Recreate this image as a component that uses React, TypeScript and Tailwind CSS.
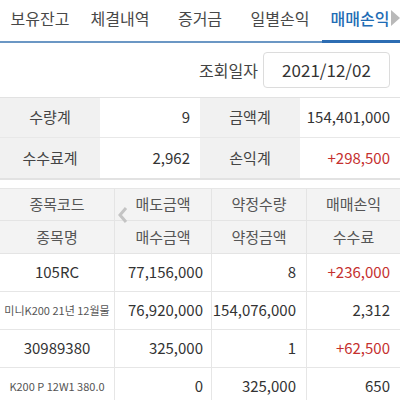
import { useState } from 'react';

const tabs = ['보유잔고', '체결내역', '증거금', '일별손익', '매매손익'];

const rows = [
  { code: '105RC', name: '미니K200 21년 12월물', sell: '77,156,000', buy: '76,920,000', qty: '8', amt: '154,076,000', pl: '+236,000', fee: '2,312' },
  { code: '30989380', name: 'K200 P 12W1 380.0', sell: '325,000', buy: '0', qty: '1', amt: '325,000', pl: '+62,500', fee: '650' },
];

export default function App() {
  const [active, setActive] = useState(4);

  return (
    <div
      className="w-[400px] h-[400px] overflow-hidden bg-white text-[#333]"
      style={{ fontFamily: '"Noto Sans CJK KR", "Noto Sans", sans-serif' }}
    >
      {/* Tabs */}
      <div className="relative flex h-[43px] border-b-2 border-[#6b97c4]">
        {tabs.map((t, i) => (
          <button
            key={t}
            onClick={() => setActive(i)}
            className={`relative w-[80px] shrink-0 pb-[5px] text-[16px] ${i === active ? 'text-[#1f6db5] font-medium' : 'text-[#484848]'}`}
          >
            {t}
            {i === active && <span className="absolute left-[2px] right-[-2px] bottom-[-2px] h-[3px] bg-[#2d6db3]" />}
          </button>
        ))}
        <svg className="absolute right-0 top-[10px]" width="9" height="16" viewBox="0 0 9 16">
          <path d="M0 0 L9 8 L0 16 Z" fill="#b9b9b9" />
        </svg>
      </div>

      {/* Date */}
      <div className="flex items-center justify-end h-[54px] pr-[10px]">
        <span className="text-[16px] text-[#444] mr-[5px]">조회일자</span>
        <div className="w-[127px] h-[36px] border border-[#dcdcdc] rounded-[4px] flex items-center justify-center text-[17px] text-[#333]">
          2021/12/02
        </div>
      </div>

      {/* Summary */}
      <div className="border-t border-b-2 border-[#e2e2e2] text-[15px]">
        <div className="grid grid-cols-4 h-[40px] border-b border-[#e8e8e8]">
          <div className="bg-[#f1f1f1] flex items-center justify-center text-[#444]">수량계</div>
          <div className="flex items-center justify-end pr-[10px]">9</div>
          <div className="bg-[#f1f1f1] flex items-center justify-center text-[#444]">금액계</div>
          <div className="flex items-center justify-end pr-[10px]">154,401,000</div>
        </div>
        <div className="grid grid-cols-4 h-[40px]">
          <div className="bg-[#f1f1f1] flex items-center justify-center text-[#444]">수수료계</div>
          <div className="flex items-center justify-end pr-[10px]">2,962</div>
          <div className="bg-[#f1f1f1] flex items-center justify-center text-[#444]">손익계</div>
          <div className="flex items-center justify-end pr-[10px] text-[#c5302e]">+298,500</div>
        </div>
      </div>

      {/* List */}
      <div className="relative mt-[8px] border-t border-[#e6e6e6] text-[15px]">
        <div className="grid grid-cols-[115px_97px_95px_93px] bg-[#f3f3f3] text-[#555]">
          {['종목코드', '매도금액', '약정수량', '매매손익'].map((h, i) => (
            <div key={h} className={`h-[32px] flex items-center justify-center border-b border-[#e4e4e4] ${i < 3 ? 'border-r' : ''}`}>{h}</div>
          ))}
          {['종목명', '매수금액', '약정금액', '수수료'].map((h, i) => (
            <div key={h} className={`h-[33px] flex items-center justify-center border-b border-[#e4e4e4] ${i < 3 ? 'border-r' : ''}`}>{h}</div>
          ))}
        </div>
        {rows.map((r) => (
          <div key={r.code}>
            <div className="grid grid-cols-[115px_97px_95px_93px] h-[38px] border-b border-[#e6e6e6]">
              <div className="flex items-center justify-center border-r border-[#e6e6e6]">{r.code}</div>
              <div className="flex items-center justify-end pr-[8px] border-r border-[#e6e6e6]">{r.sell}</div>
              <div className="flex items-center justify-end pr-[10px] border-r border-[#e6e6e6]">{r.qty}</div>
              <div className="flex items-center justify-end pr-[10px] text-[#c5302e]">{r.pl}</div>
            </div>
            <div className="grid grid-cols-[115px_97px_95px_93px] h-[38px] border-b border-[#e6e6e6]">
              <div className="flex items-center justify-center border-r border-[#e6e6e6] text-[#555] text-[11px] whitespace-nowrap">{r.name}</div>
              <div className="flex items-center justify-end pr-[8px] border-r border-[#e6e6e6] whitespace-nowrap">{r.buy}</div>
              <div className="flex items-center justify-end pr-[10px] border-r border-[#e6e6e6] whitespace-nowrap">{r.amt}</div>
              <div className="flex items-center justify-end pr-[10px]">{r.fee}</div>
            </div>
          </div>
        ))}
        <svg className="absolute left-[118px] top-[18px]" width="10" height="16" viewBox="0 0 10 16">
          <path d="M8 1 L2 8 L8 15" fill="none" stroke="#c4c4c4" strokeWidth="3" />
        </svg>
      </div>
    </div>
  );
}
